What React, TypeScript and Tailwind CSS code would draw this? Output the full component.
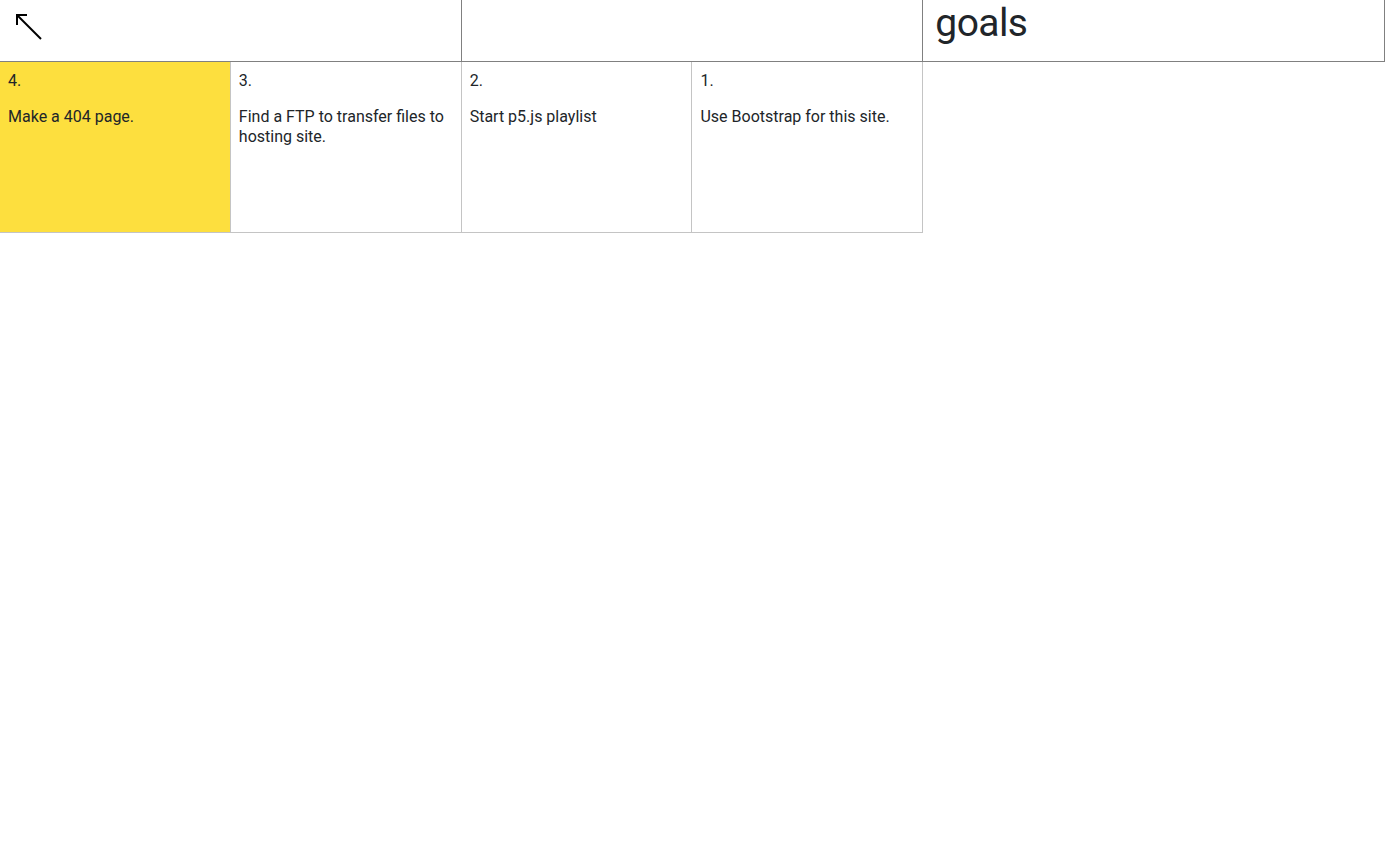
const goals = [
  { n: 4, text: 'Make a 404 page.', done: true },
  { n: 3, text: 'Find a FTP to transfer files to hosting site.' },
  { n: 2, text: 'Start p5.js playlist' },
  { n: 1, text: 'Use Bootstrap for this site.' },
];

function BackArrow() {
  return (
    <svg width="28" height="28" viewBox="0 0 28 28" fill="none" stroke="#000" strokeWidth="2" aria-hidden="true">
      <line x1="2" y1="2" x2="26" y2="26" />
      <polyline points="2 12 2 2 12 2" />
    </svg>
  );
}

export default function App() {
  return (
    <div className="min-h-screen bg-white text-[#212529]" style={{ fontFamily: 'Roboto, "Noto Sans", sans-serif' }}>
      <header className="grid grid-cols-3">
        <div className="h-[62px] border-r border-b border-[#808080] pl-[15px] pt-[13px]">
          <BackArrow />
        </div>
        <div className="h-[62px] border-r border-b border-[#808080]" />
        <div className="h-[62px] border-r border-b border-[#808080] px-3">
          <h1 className="text-[39px] leading-[47px] font-normal tracking-[-0.015em]">goals</h1>
        </div>
      </header>
      <section className="grid grid-cols-6">
        {goals.map((g) => (
          <div
            key={g.n}
            className={`h-[171px] border-r border-b border-[#c4c4c4] px-2 pt-[9px] text-base leading-5 ${g.done ? 'bg-[#fddf3e]' : 'bg-white'}`}
          >
            <p className="mb-4">{g.n}.</p>
            <p>{g.text}</p>
          </div>
        ))}
      </section>
    </div>
  );
}
